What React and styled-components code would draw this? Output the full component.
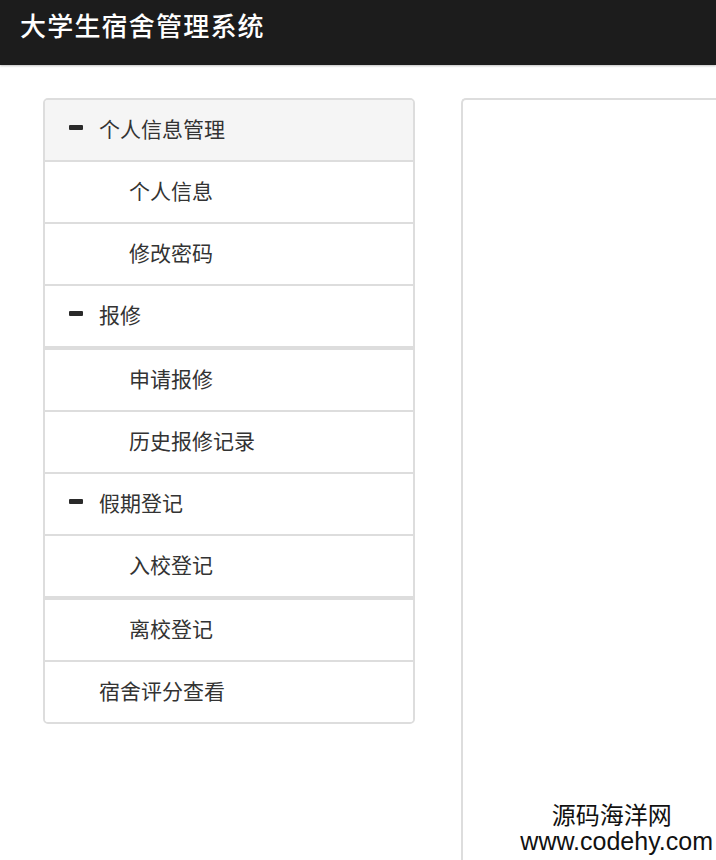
import React from "react";
import styled, { createGlobalStyle } from "styled-components";

const GlobalStyle = createGlobalStyle`
    body {
        margin: 0;
        background: #ffffff;
        font-family: "Liberation Sans", "Noto Sans CJK SC", sans-serif;
        overflow: hidden;
    }
`;

const Page = styled.div`
    width: 716px;
    height: 860px;
    position: relative;
    overflow: hidden;
`;

const TopBar = styled.header`
    height: 65px;
    background-color: #1c1c1c;
    box-shadow: 0 1px 2px rgba(0, 0, 0, 0.25);
    padding: 9px 0 0 20px;
    box-sizing: border-box;
`;

const Title = styled.h1`
    margin: 0;
    font-size: 26px;
    line-height: 36px;
    font-weight: 500;
    color: #ffffff;
    letter-spacing: 1.2px;
`;

const Body = styled.div`
    display: flex;
    align-items: flex-start;
    gap: 46px;
    padding: 33px 0 0 43px;
`;

const Menu = styled.nav`
    width: 372px;
    border: 2px solid #dddddd;
    border-radius: 5px;
    box-sizing: border-box;
    overflow: hidden;
`;

const Item = styled.div`
    height: ${(p) => (p.$first ? 60 : p.$thick ? 64 : 62)}px;
    display: flex;
    align-items: center;
    box-sizing: border-box;
    padding-left: ${(p) => (p.$sub ? 84 : p.$icon ? 24 : 54)}px;
    padding-bottom: 5px;
    font-size: 21px;
    color: #333333;
    background-color: ${(p) => (p.$open ? "#f5f5f5" : "#ffffff")};
    border-top: ${(p) => (p.$first ? 0 : p.$thick ? 4 : 2)}px solid #dddddd;
`;

const Minus = styled.span`
    width: 14px;
    height: 5px;
    background-color: #2a2a2a;
    margin-right: 16px;
    border-radius: 1px;
`;

const Content = styled.section`
    flex: 1;
    height: 800px;
    border: 2px solid #dddddd;
    border-right: none;
    border-radius: 5px 0 0 0;
`;

const Watermark = styled.div`
    position: absolute;
    right: 3px;
    bottom: 4px;
    text-align: center;
    color: #111111;
    line-height: 1.15;
    font-family: "Noto Sans CJK SC", sans-serif;
`;

const MarkTitle = styled.div`
    font-size: 24px;
    padding-right: 10px;
`;

const MarkUrl = styled.div`
    font-family: "Liberation Sans", sans-serif;
    font-size: 25px;
`;

const menu = [
    { text: "个人信息管理", icon: true, open: true, first: true },
    { text: "个人信息", sub: true },
    { text: "修改密码", sub: true },
    { text: "报修", icon: true },
    { text: "申请报修", sub: true, thick: true },
    { text: "历史报修记录", sub: true },
    { text: "假期登记", icon: true },
    { text: "入校登记", sub: true },
    { text: "离校登记", sub: true, thick: true },
    { text: "宿舍评分查看" },
];

export default function App() {
    return (
        <Page>
            <GlobalStyle />
            <TopBar>
                <Title>大学生宿舍管理系统</Title>
            </TopBar>
            <Body>
                <Menu>
                    {menu.map((m) => (
                        <Item
                            key={m.text}
                            $sub={m.sub}
                            $icon={m.icon}
                            $open={m.open}
                            $first={m.first}
                            $thick={m.thick}
                        >
                            {m.icon && <Minus />}
                            {m.text}
                        </Item>
                    ))}
                </Menu>
                <Content />
            </Body>
            <Watermark>
                <MarkTitle>源码海洋网</MarkTitle>
                <MarkUrl>www.codehy.com</MarkUrl>
            </Watermark>
        </Page>
    );
}
